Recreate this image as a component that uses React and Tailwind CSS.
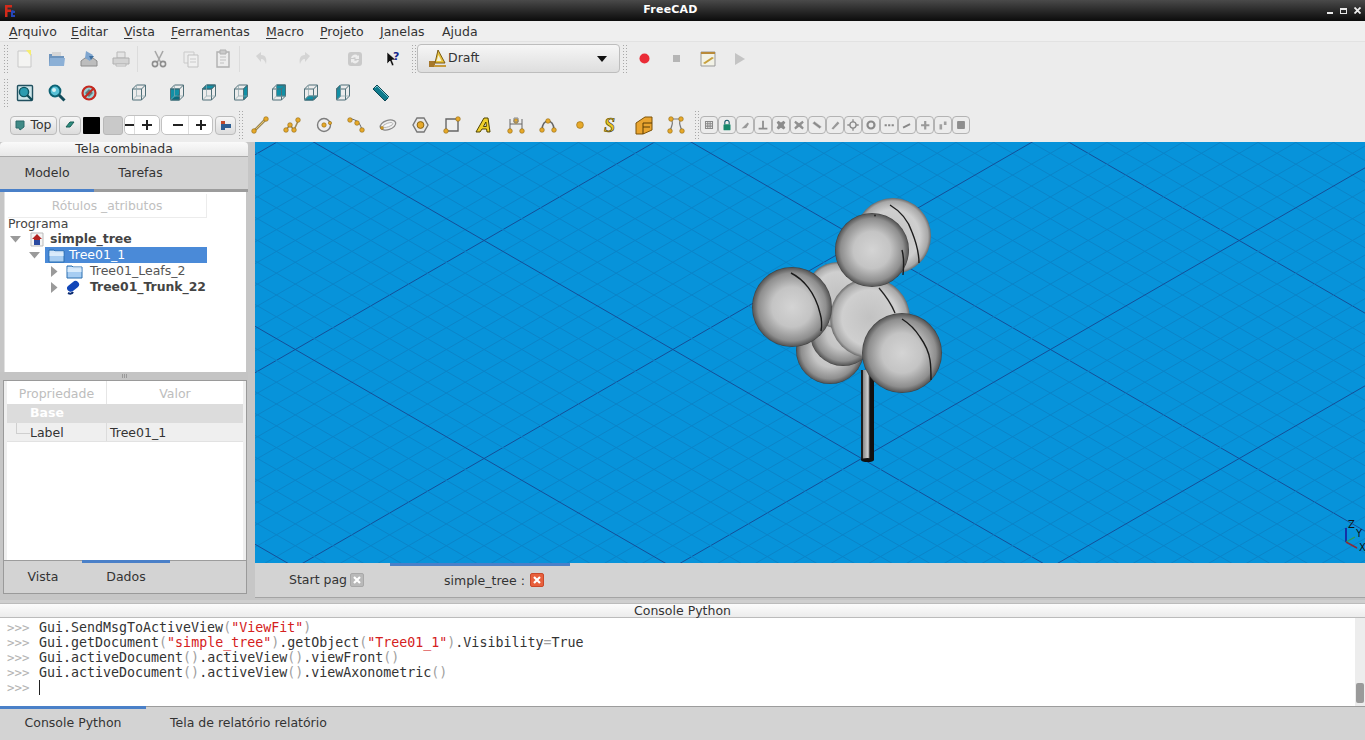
import React from "react";

const S = ({ children, size = 20, dim = false, view = "0 0 20 20" }) => (
  <svg width={size} height={size} viewBox={view} className={dim ? "opacity-50" : ""}>{children}</svg>
);

const Btn = ({ children, w = "w-8" }) => (
  <div className={`${w} h-8 flex items-center justify-center shrink-0`}>{children}</div>
);

const Sep = ({ w = "w-[6px]" }) => (
  <div className={`${w} h-[26px] flex justify-start shrink-0`}>
    <div className="w-px h-full bg-[#dcdcdc]" />
  </div>
);

const Handle = () => (
  <div className="w-[5px] h-[30px] shrink-0 bg-[radial-gradient(#a8a8a8_0.6px,transparent_0.8px)] bg-[length:3px_3px]" />
);

const IconNew = () => (
  <S><path d="M3 2h10l3 3v13H3z" fill="#f4f4f2" stroke="#c8c8c8" /><path d="M11 1l5 0 0 6z" fill="#f6ee70" /></S>
);
const IconOpen = () => (
  <S><path d="M2 5h6l2 2h7v10H2z" fill="#6f95bd" /><path d="M3 9h15l-1 8H2z" fill="#8cb0d6" /><path d="M5 3h9v4H5z" fill="#d6d6d6" /></S>
);
const IconSave = () => (
  <S><path d="M2 12l4-3h8l4 3v5H2z" fill="#bdbdbd" stroke="#8c8c8c" /><path d="M7 2l7 4-3 6-5-3z" fill="#7ea5cf" /><path d="M10 7h5l-3 4z" fill="#3f6f9f" /></S>
);
const IconPrint = () => (
  <S dim><path d="M6 3h8v6H6z" fill="#ddd" stroke="#888" /><path d="M2 9h16v6H2z" fill="#bbb" stroke="#777" /><path d="M5 15h10v2H5z" fill="#eee" stroke="#888" /></S>
);
const IconCut = () => (
  <S dim><path d="M6 2l6 12M14 2L8 14" stroke="#666" strokeWidth="1.6" /><circle cx="6" cy="15" r="2.6" fill="none" stroke="#333" strokeWidth="1.6" /><circle cx="14" cy="15" r="2.6" fill="none" stroke="#333" strokeWidth="1.6" /></S>
);
const IconCopy = () => (
  <S dim><path d="M3 3h10v11H3z" fill="#eee" stroke="#aaa" /><path d="M7 6h10v12H7z" fill="#f4f4f4" stroke="#999" /><path d="M9 10h6M9 13h6" stroke="#aaa" /></S>
);
const IconPaste = () => (
  <S dim><path d="M4 3h12v15H4z" fill="#eee" stroke="#777" strokeWidth="1.4" /><path d="M7 1h6v4H7z" fill="#aaa" stroke="#777" /><path d="M7 8h6M7 11h6M7 14h4" stroke="#999" /></S>
);
const IconUndo = () => (
  <S dim><path d="M5 7l5-4v3c5 0 6 4 5 9-1-3-2-5-5-5v3z" fill="#bdbdbd" /></S>
);
const IconRedo = () => (
  <S dim><path d="M15 7l-5-4v3c-5 0-6 4-5 9 1-3 2-5 5-5v3z" fill="#bdbdbd" /></S>
);
const IconRefresh = () => (
  <S dim><rect x="3" y="3" width="14" height="14" rx="3" fill="#aaa" /><path d="M6 9a4 4 0 0 1 7-2l1-1v4h-4l1-1a2 2 0 0 0-3 0zM14 11a4 4 0 0 1-7 2l-1 1v-4h4l-1 1a2 2 0 0 0 3 0z" fill="#eee" /></S>
);
const IconHelp = () => (
  <S><path d="M4 3v12l3-3 2 5 2-1-2-5h4z" fill="#111" stroke="#fff" strokeWidth=".6" /><text x="10" y="11" fontSize="11" fontWeight="700" fill="#17278c" fontFamily="DejaVu Sans">?</text></S>
);
const IconDraft = () => (
  <S view="0 0 20 20"><path d="M1 12h6v6H1z" fill="#a6782c" /><path d="M6 16h12v2H6z" fill="#c79a3c" /><path d="M10 1l7 13H7z" fill="#e7c23a" stroke="#7a5b14" /><path d="M10.5 6l3 6h-5z" fill="#f5f0d8" /></S>
);
const IconFit = () => (
  <S><rect x="2.5" y="2.5" width="15" height="15" rx="1" fill="#cfe6ea" stroke="#21505f" strokeWidth="1.4" /><circle cx="9" cy="9" r="4.6" fill="#2b9bb0" stroke="#0e5562" strokeWidth="1.4" /><path d="M12 12l5 5" stroke="#0e4b58" strokeWidth="2.4" /></S>
);
const IconZoom = () => (
  <S><circle cx="8" cy="8" r="5.4" fill="#58c0d6" stroke="#0d6274" strokeWidth="2" /><circle cx="7" cy="7" r="2" fill="#d8f3f6" /><path d="M12 12l5.5 5.5" stroke="#114b5a" strokeWidth="3" /></S>
);
const IconNo = () => (
  <S><circle cx="10" cy="10" r="6.5" fill="#9ad0d6" stroke="#c42a20" strokeWidth="2.2" /><path d="M6 10l4-4 4 4-4 4z" fill="#333" opacity=".55" /><path d="M5 15L15 5" stroke="#c42a20" strokeWidth="2.2" /></S>
);

const faces = {
  top: "M3.500 6l4-4h9l-4 4z",
  front: "M3.500 6h9v11h-9z",
  right: "M12.500 6l4-4v11l-4 4z",
  back: "M7.500 2h9v11h-9z",
  bottom: "M3.500 17l4-4h9l-4 4z",
  left: "M3.500 6l4-4v11l-4 4z",
};
const Cube = ({ face }) => (
  <S>
    {face && <path d={faces[face]} fill="#118fa5" stroke="#0a6373" />}
    {face === "front" && <path d="M3.500 17l9-6v6z" fill="#0a6b7c" />}
    <path d="M3.500 6l4-4h9v11l-4 4h-9zM3.500 6h9v11M12.500 6l4-4" fill="none" stroke="#4f6f78" />
    <path d="M7.500 2v11l-4 4M7.500 13h9" fill="none" stroke="#8ea6ac" strokeWidth=".7" />
  </S>
);
const IconMeasure = () => (
  <S><path d="M2 6l4-4 12 12-4 4z" fill="#0f7b8d" stroke="#0a4654" /><path d="M4 5l2-2 12 12" fill="none" stroke="#8ad0da" strokeWidth=".9" /></S>
);

const N = ({ x, y, r = 2.3 }) => <circle cx={x} cy={y} r={r} fill="#e7a92a" stroke="#8f6610" strokeWidth=".6" />;
const L = ({ d }) => <path d={d} fill="none" stroke="#a08a55" strokeWidth="1.6" />;

const DLine = () => <S><path d="M3 17L17 3" stroke="#7a6a3a" strokeWidth="2.600" /><path d="M3 17L17 3" stroke="#e2c272" strokeWidth="1.200" /><N x={4} y={16} /><N x={16} y={4} /></S>;
const DWire = () => <S><L d="M3 16l5-6 4 5 5-11" /><N x={4} y={15} /><N x={8} y={10} /><N x={12} y={15} /><N x={16} y={5} /></S>;
const DCircle = () => <S><circle cx="10" cy="10" r="6.5" fill="#eee" stroke="#7d7d7d" strokeWidth="1.4" /><N x={10} y={10} r={2.2} /><N x={16} y={8} r={1.6} /></S>;
const DArc = () => <S><path d="M4 4c7 0 11 5 12 12" fill="none" stroke="#666" strokeWidth="1" /><N x={4} y={5} /><N x={11} y={8} /><N x={16} y={15} /></S>;
const DEllipse = () => <S><ellipse cx="10" cy="10" rx="8" ry="4.6" transform="rotate(-18 10 10)" fill="#eee" stroke="#888" strokeWidth="1.3" /><ellipse cx="10" cy="10" rx="5" ry="1.8" transform="rotate(-18 10 10)" fill="#f8f8f8" stroke="#aaa" strokeWidth=".8" /><N x={4} y={13} r={1.4} /></S>;
const DPoly = () => <S><path d="M7 3h7l4 7-4 7H7l-4-7z" fill="#e8e8e8" stroke="#777" strokeWidth="1.4" /><circle cx="10.5" cy="10" r="3.4" fill="#e7a92a" stroke="#8a6518" /></S>;
const DRect = () => <S><path d="M4 4h12v12H4z" fill="#eee" stroke="#666" strokeWidth="1.4" /><N x={4} y={16} /><N x={16} y={4} /></S>;
const DText = () => <S><path d="M2 17L10 3h4l2 14h-3l-.4-3H8l-2 3zM9.400 11.500h3l-.5-4.500z" fill="#f0d02a" stroke="#4f4300" strokeWidth="1" fillRule="evenodd" /></S>;
const DDim = () => <S><path d="M4 4v13M16 4v13M4 9h12" stroke="#666" fill="none" /><N x={4} y={16} /><N x={16} y={16} /><N x={10} y={6} /><path d="M8 3h4v4H8z" fill="none" stroke="#888" /></S>;
const DCurve = () => <S><path d="M4 15c0-12 12-12 12 0" fill="none" stroke="#666" strokeWidth="1.5" /><N x={4} y={15} /><N x={10} y={6} /><N x={16} y={15} /></S>;
const DPoint = () => <S><N x={10} y={10} r={3.4} /></S>;
const DShape = () => <S><text x="2" y="17" fontSize="20" fontStyle="italic" fontWeight="700" fontFamily="Liberation Serif" fill="#e9c726" stroke="#3f3400" strokeWidth=".6">S</text></S>;
const DFace = () => <S><path d="M2 8l9-6h7v13l-9 4H2z" fill="#e9a42f" stroke="#7c5207" /><path d="M9 8h9M9 12h7M9 8v11" stroke="#5a3c05" fill="none" /></S>;
const DBez = () => <S><path d="M5 4c2 3 2 4-1 12M15 4c-2 3-2 4 1 12M5 4h10" fill="none" stroke="#777" strokeWidth="1.2" /><N x={5} y={4} /><N x={15} y={4} /><N x={4} y={16} /><N x={16} y={16} /></S>;

const snaps = [
  <path d="M4 4h8v8H4zM4 6.600h8M4 9.300h8M6.600 4v8M9.300 4v8" fill="none" stroke="#8a8a8a" strokeWidth="1.200" />,
  <g><path d="M5.500 7V5a2.500 2.500 0 0 1 5 0v2" fill="none" stroke="#156" strokeWidth="1.200" /><rect x="4" y="7" width="8" height="7" rx="1" fill="#17876b" /></g>,
  <path d="M4 12L11 5l1.500 1.500-3 5z" fill="#999" />,
  <path d="M7 3h2v8h4v2H3v-2h4z" fill="#8c8c8c" />,
  <path d="M5 3l3 2 3-2 2 2-2 3 2 3-2 2-3-2-3 2-2-2 2-3-2-3z" fill="#8c8c8c" />,
  <path d="M4 3l4 3 4-3 1.500 2-3 3 3 3-1.500 2-4-3-4 3-1.500-2 3-3-3-3z" fill="#909090" />,
  <path d="M3 6l2-2 8 6-2 2z" fill="#8a8a8a" stroke="#bbb" strokeWidth=".5" />,
  <path d="M4 12l7-8 2 2-7 7z" fill="#999" />,
  <g><circle cx="8" cy="8" r="3.500" fill="none" stroke="#8a8a8a" strokeWidth="1.500" /><path d="M8 1.500v3M8 11.500v3M1.500 8h3M11.500 8h3" stroke="#8a8a8a" strokeWidth="1.500" /></g>,
  <circle cx="8" cy="8" r="4" fill="none" stroke="#8a8a8a" strokeWidth="2.500" />,
  <path d="M3 7h2.500v2.500H3zM7 7h2.500v2.500H7zM11 7h2.500v2.500H11z" fill="#888" />,
  <path d="M3 10l8-4 1 2-8 4z" fill="#888" />,
  <path d="M7 3.500h2.500V7H13v2.500H9.500V13H7V9.500H3.500V7H7z" fill="#999" />,
  <path d="M4 7h3v6H4zM9 4h3v4H9z" fill="#a0a0a0" />,
  <rect x="3.500" y="3.500" width="9" height="9" rx="1" fill="#8e8e8e" />,
];

const SmallBtn = ({ children, className = "" }) => (
  <div className={`h-[19px] rounded-[4px] border border-[#bcbcbc] bg-gradient-to-b from-[#f6f6f6] to-[#dcdcdc] flex items-center justify-center shrink-0 ${className}`}>
    {children}
  </div>
);

const Spin = ({ pre, className, preW, minusW }) => (
  <div className={`h-[20px] bg-white rounded-[5px] border border-[#c2c2c2] flex items-center overflow-hidden shrink-0 ${className}`}>
    <span className={`${preW} text-[12px] leading-none text-[#222] overflow-hidden shrink-0`}>{pre}</span>
    <span className={`${minusW} flex justify-center overflow-hidden shrink-0`}><span className="w-[10px] h-[2px] bg-[#222] shrink-0" /></span>
    <span className="w-px h-full bg-[#ddd] shrink-0" />
    <span className="flex-1 flex justify-center">
      <svg width="10" height="10" viewBox="0 0 10 10"><path d="M4 0h2v4h4v2H6v4H4V6H0V4h4z" fill="#222" /></svg>
    </span>
  </div>
);

const Menu = ({ u, r, pre = "", cls }) => (
  <span className={`whitespace-nowrap ${cls}`}>{pre}<span className="underline underline-offset-2">{u}</span>{r}</span>
);

const slope = 0.5774;
const range = (a, b) => Array.from({ length: b - a + 1 }, (_, i) => a + i);

const Sphere = ({ x, y, r, id = "ball" }) => <circle cx={x} cy={y} r={r} fill={`url(#${id})`} />;

const Viewport = () => (
  <svg viewBox="255 142 1110 421" className="w-full h-full block bg-[#0793da]">
    <defs>
      <radialGradient id="ball" cx="50%" cy="50%" r="50%">
        <stop offset="0%" stopColor="#d4d4d4" />
        <stop offset="50%" stopColor="#c4c4c4" />
        <stop offset="85%" stopColor="#8e8e8e" />
        <stop offset="97%" stopColor="#5c5c5c" />
        <stop offset="100%" stopColor="#3a3a3a" />
      </radialGradient>
      <radialGradient id="soft" cx="50%" cy="50%" r="50%">
        <stop offset="0%" stopColor="#c2c2c2" />
        <stop offset="70%" stopColor="#cfcfcf" />
        <stop offset="92%" stopColor="#a8a8a8" />
        <stop offset="100%" stopColor="#6a6a6a" />
      </radialGradient>
      <linearGradient id="trunk" x1="0" x2="1" y1="0" y2="0">
        <stop offset="0%" stopColor="#1a1a1a" />
        <stop offset="15%" stopColor="#222" />
        <stop offset="17%" stopColor="#8a8a8a" />
        <stop offset="55%" stopColor="#d2d2d2" />
        <stop offset="62%" stopColor="#666" />
        <stop offset="70%" stopColor="#111" />
        <stop offset="100%" stopColor="#111" />
      </linearGradient>
    </defs>
    {range(-60, 60).map((k) => {
      const major = ((k % 10) + 10) % 10 === 0;
      const c1 = -257 + k * 21.8;
      const c2 = 738 + k * 21.8;
      const stroke = major ? "#154f98" : "#0b84c8";
      return (
        <g key={k}>
          <line x1="255" x2="1365" y1={255 * slope + c1} y2={1365 * slope + c1} stroke={stroke} strokeWidth="1" />
          <line x1="255" x2="1365" y1={c2 - 255 * slope} y2={c2 - 1365 * slope} stroke={stroke} strokeWidth="1" />
        </g>
      );
    })}
    <rect x="861" y="370" width="13" height="90" fill="url(#trunk)" />
    <ellipse cx="867.500" cy="460" rx="6.500" ry="2" fill="#111" />
    <Sphere x={830} y={350} r={34} />
    <Sphere x={843} y={333} r={33} />
    <Sphere x={838} y={295} r={33} id="soft" />
    <Sphere x={870} y={318} r={40} id="soft" />
    <path d="M879 288c6 7 12 15 16 25" fill="none" stroke="#222" strokeWidth="1.300" />
    <Sphere x={893} y={236} r={38} id="soft" />
    <path d="M890 205c10 6 18 15 22 27 4 10 7 20 7 31" fill="none" stroke="#1c1c1c" strokeWidth="1.400" />
    <Sphere x={872} y={250} r={37} />
    <path d="M902 250c2 7 2 15 1 25" fill="none" stroke="#1c1c1c" strokeWidth="1.400" />
    <circle cx="875" cy="215.500" r=".9" fill="#222" />
    <Sphere x={792} y={307} r={40} />
    <path d="M791 273c12 6 24 19 29 40 2 7 2 13 1 18" fill="none" stroke="#1a1a1a" strokeWidth="1.400" />
    <Sphere x={902} y={353} r={40} />
    <path d="M902 319c8 5 13 10 18 18 5 7 9 16 10 23 1 6 1 12 1 20" fill="none" stroke="#1a1a1a" strokeWidth="1.400" />
    <path d="M1346 542v-14" stroke="#1a1a9a" strokeWidth="1.600" />
    <path d="M1346 542l9-5" stroke="#2e9a52" strokeWidth="1.400" />
    <path d="M1346 542l11 6" stroke="#8a2a3a" strokeWidth="1.600" />
    <text x="1348" y="528" fontSize="10" fill="#111" fontFamily="DejaVu Sans">Z</text>
    <text x="1356" y="537" fontSize="10" fill="#111" fontFamily="DejaVu Sans">Y</text>
    <text x="1359" y="551" fontSize="10" fill="#111" fontFamily="DejaVu Sans">X</text>
  </svg>
);

const Caret = ({ open }) =>
  open ? (
    <svg width="11" height="7" viewBox="0 0 11 7"><path d="M0 0h11L5.500 6.500z" fill="#9a9a9a" /></svg>
  ) : (
    <svg width="7" height="11" viewBox="0 0 7 11"><path d="M0 0v11l6.500-5.500z" fill="#9a9a9a" /></svg>
  );

const Folder = () => (
  <svg width="17" height="15" viewBox="0 0 17 15"><path d="M1 2h5l1 1h9v11H1z" fill="#a7cdf2" stroke="#2a6fb0" /><path d="M1.500 4h14" stroke="#fff" /><path d="M1.500 5h14v3h-14z" fill="#d9ebfb" /></svg>
);

const Close = ({ red }) => (
  <div className={`w-[14px] h-[14px] rounded-[2px] flex items-center justify-center shrink-0 border ${red ? "bg-[#e8603c] border-[#c9482a]" : "bg-[#b9b9b9] border-[#a8a8a8]"}`}>
    <svg width="8" height="8" viewBox="0 0 8 8"><path d="M1 1l6 6M7 1L1 7" stroke="#fff" strokeWidth="2.200" /></svg>
  </div>
);

const Kw = ({ children }) => <span className="text-[#d42020]">{children}</span>;
const G = ({ children }) => <span className="text-[#a0a0a0]">{children}</span>;

const ConsoleLine = ({ children }) => (
  <div className="h-[15px] leading-[15px] whitespace-pre flex">
    <span className="w-[32px] text-[#b4b4b4] shrink-0 text-[12.500px]">{">>>"}</span>
    <span className="text-[#333]">{children}</span>
  </div>
);

export default function App() {
  return (
    <div className="w-[1365px] h-[740px] overflow-hidden flex flex-col bg-[#cdcdcd] text-[#333] font-['DejaVu_Sans',sans-serif] text-[12.500px]">
      {/* title bar */}
      <div className="h-[21px] shrink-0 bg-gradient-to-b from-[#4a4a4a] via-[#2a2a2a] to-[#0c0c0c] flex items-center relative">
        <div className="w-[16px] pl-[4px] flex shrink-0">
          <svg width="12" height="12" viewBox="0 0 12 12"><path d="M1 0h7v2.500H3.500v2H7V7H3.500v5H1z" fill="#d22a1a" /><path d="M8 5l3 1v2H9v2h2v2H7V6z" fill="#2546b8" /></svg>
        </div>
        <div className="flex-1 text-center text-white font-bold text-[11px] tracking-[0.2px] pr-[2px]">FreeCAD</div>
        <div className="flex items-center gap-[7px] pr-[4px] shrink-0">
          <span className="w-[6px] h-[2px] mt-[4px] bg-[#e8e8e8]" />
          <span className="w-[7px] h-[6px] border border-t-2 border-[#e8e8e8]" />
          <svg width="7" height="7" viewBox="0 0 7 7"><path d="M.5.500l6 6M6.500.500l-6 6" stroke="#eee" strokeWidth="1.800" /></svg>
        </div>
      </div>

      {/* menu */}
      <div className="h-[21px] shrink-0 bg-[#efefef] flex items-center pl-[9px] pt-[2px] text-[#333] border-b border-[#e2e2e2]">
        <Menu u="A" r="rquivo" cls="w-[62px]" />
        <Menu u="E" r="ditar" cls="w-[53px]" />
        <Menu u="V" r="ista" cls="w-[47px]" />
        <Menu u="F" r="erramentas" cls="w-[95px]" />
        <Menu u="M" r="acro" cls="w-[54px]" />
        <Menu u="P" r="rojeto" cls="w-[60px]" />
        <Menu u="J" r="anelas" cls="w-[62px]" />
        <Menu u="" r="Ajuda" />
      </div>

      {/* toolbar 1 */}
      <div className="h-[33px] shrink-0 bg-[#ececec] flex items-center pl-[3px]">
        <Handle />
        <div className="w-px" />
        <Btn><IconNew /></Btn><Btn><IconOpen /></Btn><Btn><IconSave /></Btn><Btn><IconPrint /></Btn>
        <Sep /><Btn><IconCut /></Btn><Btn><IconCopy /></Btn><Btn><IconPaste /></Btn>
        <Sep /><Btn><IconUndo /></Btn><div className="w-[12px]" /><Btn><IconRedo /></Btn>
        <div className="w-[14px]" /><Sep w="w-0" /><div className="w-[4px]" /><Btn><IconRefresh /></Btn><div className="w-[2px]" />
        <Sep w="w-0" /><div className="w-[4px]" /><Btn><IconHelp /></Btn>
        <div className="w-[2px]" /><Handle />
        <div className="w-[1px]" />
        <div className="w-[203px] h-[29px] shrink-0 rounded-[4px] border border-[#bdbdbd] bg-gradient-to-b from-[#f6f6f6] to-[#dedede] flex items-center pl-[10px] pr-[12px] text-[#333]">
          <IconDraft />
          <span className="flex-1">Draft</span>
          <svg width="10" height="6" viewBox="0 0 10 6"><path d="M0 0h10L5 6z" fill="#111" /></svg>
        </div>
        <div className="w-[2px]" /><Handle />
        <div className="w-[1px]" />
        <Btn><svg width="11" height="11" viewBox="0 0 11 11"><circle cx="5.500" cy="5.500" r="5" fill="#ea2c36" /></svg></Btn>
        <Btn><span className="w-[7px] h-[7px] bg-[#b5b5b5]" /></Btn>
        <Btn><svg width="18" height="18" viewBox="0 0 18 18"><path d="M2 2h14v14H2z" fill="#f2f2e6" stroke="#999" /><path d="M2 2h14v2H2z" fill="#b88a3a" /><path d="M4 13l9-6 2 1-9 6z" fill="#c7a03c" /></svg></Btn>
        <Btn><svg width="10" height="12" viewBox="0 0 10 12"><path d="M0 0v12l10-6z" fill="#c4c4c4" /></svg></Btn>
      </div>

      {/* toolbar 2 */}
      <div className="h-[33px] shrink-0 bg-[#ececec] flex items-center pl-[3px] pt-[2px]">
        <Handle /><div className="w-px" />
        <Btn><IconFit /></Btn><Btn><IconZoom /></Btn><Btn><IconNo /></Btn>
        <div className="w-[15px]" /><Sep w="w-0" /><div className="w-[3px]" />
        <Btn><Cube /></Btn>
        <div className="w-[3px]" /><Sep w="w-[0px]" /><div className="w-[3px]" />
        <Btn><Cube face="front" /></Btn><Btn><Cube face="top" /></Btn><Btn><Cube face="right" /></Btn>
        <div className="w-[3px]" /><Sep w="w-[0px]" /><div className="w-[3px]" />
        <Btn><Cube face="back" /></Btn><Btn><Cube face="bottom" /></Btn><Btn><Cube face="left" /></Btn>
        <div className="w-[3px]" /><Sep w="w-[0px]" /><div className="w-[3px]" />
        <Btn><IconMeasure /></Btn>
      </div>

      {/* toolbar 3 */}
      <div className="h-[34px] shrink-0 bg-[#ececec] flex items-center pl-[10px]">
        <SmallBtn className="w-[47px] gap-[5px]">
          <svg width="10" height="11" viewBox="0 0 10 11"><path d="M1 1h8v6l-4 3-1-2H1z" fill="#3f8a86" stroke="#2a6a6a" /></svg>
          <span className="text-[12.500px] text-[#333]">Top</span>
        </SmallBtn>
        <div className="w-[2px]" />
        <SmallBtn className="w-[22px]">
          <svg width="12" height="10" viewBox="0 0 12 10"><path d="M2 7l4-5 4 0-4 5z" fill="#2f8f80" stroke="#185e56" /></svg>
        </SmallBtn>
        <div className="w-[2px]" />
        <div className="w-[17px] h-[17px] bg-black shrink-0 rounded-[1px]" />
        <div className="w-[3px]" />
        <div className="w-[20px] h-[19px] bg-[#c9c9c9] border border-[#b8b8b8] rounded-[3px] shrink-0" />
        <div className="w-[1px]" />
        <Spin className="w-[36px]" pre="" preW="w-0" minusW="w-[9px]" />
        <div className="w-[1px]" />
        <Spin className="w-[52px]" pre="" preW="w-[5px]" minusW="w-[21px]" />
        <div className="w-[2px]" />
        <SmallBtn className="w-[21px]">
          <svg width="12" height="12" viewBox="0 0 12 12"><path d="M1 2h4v3h6v4H5v2H1z" fill="#2e5e92" /><path d="M1 2h4v3H1z" fill="#c2492a" /></svg>
        </SmallBtn>
        <div className="w-[2px]" />
        <Handle />
        <div className="w-[1px]" />
        <Btn><DLine /></Btn><Btn><DWire /></Btn><Btn><DCircle /></Btn><Btn><DArc /></Btn><Btn><DEllipse /></Btn>
        <Btn><DPoly /></Btn><Btn><DRect /></Btn><Btn><DText /></Btn><Btn><DDim /></Btn><Btn><DCurve /></Btn>
        <Btn><DPoint /></Btn><Btn><DShape /></Btn><Btn><DFace /></Btn><Btn><DBez /></Btn>
        <div className="w-[2px]" /><Handle /><div className="w-[1px]" />
        <div className="flex">
          {snaps.map((p, i) => (
            <div key={i} className="w-[18px] h-[18px] rounded-[4px] border border-[#b3b3b3] bg-[#ececec] flex items-center justify-center shrink-0">
              <svg width="14" height="14" viewBox="0 0 16 16">{p}</svg>
            </div>
          ))}
        </div>
      </div>

      {/* main */}
      <div className="h-[458px] shrink-0 flex bg-[#c6c6c6]">
        {/* left dock */}
        <div className="w-[248px] shrink-0 flex flex-col">
          <div className="h-[15px] shrink-0 rounded-t-[4px] bg-gradient-to-b from-[#fafafa] to-[#e8e8e8] text-center leading-[13px] text-[#333] border-b border-[#aaa]">Tela combinada</div>
          <div className="h-[35px] shrink-0 bg-[#d3d3d3] flex border-b-[3px] border-[#9c9c9c] relative">
            <div className="w-[94px] text-center leading-[32px] -mb-[3px] border-b-[3px] border-[#4a80c8]">Modelo</div>
            <div className="w-[93px] text-center leading-[32px]">Tarefas</div>
          </div>
          <div className="h-[180px] shrink-0 mx-[2px] ml-[4px] bg-white border-l border-[#e2e2e2] flex flex-col">
            <div className="h-[24px] mt-[2px] w-[199px] ml-[3px] text-center text-[#c0c0c0] text-[12.300px] leading-[24px] border-b border-r border-[#ececec]">Rótulos _atributos</div>
            <div className="h-[14px] pl-[3px] -mt-px leading-[14px] text-[#444]">Programa</div>
            <div className="h-[16px] flex items-center pl-[5px] whitespace-nowrap">
              <Caret open />
              <div className="w-[9px]" />
              <svg width="14" height="15" viewBox="0 0 14 15"><path d="M1 1h12v13H1z" fill="#f4f4f4" stroke="#bbb" /><path d="M7 2l5 5h-2v6H4V7H2z" fill="#b22320" /><path d="M4 8h6v5H4z" fill="#2a4aa0" /></svg>
              <span className="ml-[6px] font-bold text-[#444]">simple_tree</span>
            </div>
            <div className="h-[16px] flex items-center pl-[24px] whitespace-nowrap">
              <Caret open />
              <div className="w-[5px]" />
              <div className="w-[162px] h-[16px] bg-[#4a8ad8] flex items-center pl-[3px] text-white"><Folder /><span className="ml-[4px]">Tree01_1</span></div>
            </div>
            <div className="h-[16px] flex items-center pl-[46px] whitespace-nowrap">
              <Caret />
              <div className="w-[8px]" />
              <Folder />
              <span className="ml-[7px] text-[#555]">Tree01_Leafs_2</span>
            </div>
            <div className="h-[16px] flex items-center pl-[46px] whitespace-nowrap">
              <Caret />
              <div className="w-[7px]" />
              <svg width="16" height="16" viewBox="0 0 16 16"><path d="M2 10a3 3 0 0 1 1-3l5-4a3.500 3.500 0 0 1 5 5l-5 4a4 4 0 0 1-6-2z" fill="#1146b8" /><path d="M3 14c2 1 4 1 5-1" stroke="#0a2a70" fill="none" strokeWidth="2" /></svg>
              <span className="ml-[9px] font-bold text-[#444] text-[12.400px]">Tree01_Trunk_22</span>
            </div>
          </div>
          <div className="h-[8px] shrink-0 flex items-center justify-center bg-[#c4c4c4]">
            <div className="w-[5px] h-[4px] border-x border-[#999] relative"><div className="w-px h-full mx-auto bg-[#999]" /></div>
          </div>
          <div className="h-[214px] shrink-0 ml-[3px] mr-[1px] border border-[#9a9a9a] bg-[#efefef] flex flex-col">
            <div className="h-[23px] shrink-0 mx-[3px] flex text-[#bdbdbd] text-center leading-[25px] bg-white">
              <div className="w-[100px] border-r border-[#e6e6e6]">Propriedade</div>
              <div className="flex-1">Valor</div>
            </div>
            <div className="h-[19px] shrink-0 mx-[3px] bg-[#dcdcdc] text-white font-bold pl-[23px] leading-[17px]">Base</div>
            <div className="h-[19px] shrink-0 mx-[3px] bg-[#efefef] flex leading-[19px] border-b border-[#e2e2e2]">
              <div className="w-[100px] pl-[9px] border-r border-[#dcdcdc] flex">
                <div className="w-[14px] h-[11px] border-l border-b border-[#cfcfcf] shrink-0" />
                <span>Label</span>
              </div>
              <div className="pl-[3px]">Tree01_1</div>
            </div>
            <div className="flex-1 mx-[3px] bg-white" />
            <div className="h-[33px] shrink-0 bg-[#d3d3d3] border-t border-[#9c9c9c] flex">
              <div className="w-[78px] text-center leading-[31px]">Vista</div>
              <div className="w-[88px] text-center leading-[31px] border-t-[3px] border-[#4a80c8] -mt-px h-[33px]">
                <span className="block -mt-[2px]">Dados</span>
              </div>
            </div>
          </div>
        </div>
        {/* splitter */}
        <div className="w-[7px] shrink-0 bg-[#c6c6c6]" />
        {/* center */}
        <div className="flex-1 flex flex-col min-w-0">
          <div className="h-[421px] shrink-0"><Viewport /></div>
          <div className="h-[35px] shrink-0 bg-[#d3d3d3] border-b border-[#a4a4a4] flex">
            <div className="w-[135px] flex items-center pl-[34px]">
              <div className="w-[61px] h-[16px] leading-[16px] overflow-hidden whitespace-nowrap">Start pag</div>
              <Close />
            </div>
            <div className="w-[180px] flex items-center pl-[54px] border-t-[3px] border-[#4a80c8]">
              <div className="w-[86px] h-[16px] leading-[16px] overflow-hidden whitespace-nowrap -mt-[2px]">simple_tree :</div>
              <div className="-mt-[3px]"><Close red /></div>
            </div>
          </div>
        </div>
      </div>

      {/* console dock */}
      <div className="h-[3px] shrink-0 bg-[#cfcfcf]" />
      <div className="h-[15px] shrink-0 bg-gradient-to-b from-[#fcfcfc] to-[#ececec] border-y border-[#bbb] text-center leading-[13px] text-[#333]">Console Python</div>
      <div className="h-[88px] shrink-0 bg-white flex font-['DejaVu_Sans_Mono',monospace] text-[13.300px]">
        <div className="flex-1 pl-[7px] pt-[2px]">
          <ConsoleLine>Gui.SendMsgToActiveView<G>(</G><Kw>"ViewFit"</Kw><G>)</G></ConsoleLine>
          <ConsoleLine>Gui.getDocument<G>(</G><Kw>"simple_tree"</Kw><G>)</G>.getObject<G>(</G><Kw>"Tree01_1"</Kw><G>)</G>.Visibility<G>=</G>True</ConsoleLine>
          <ConsoleLine>Gui.activeDocument<G>()</G>.activeView<G>()</G>.viewFront<G>()</G></ConsoleLine>
          <ConsoleLine>Gui.activeDocument<G>()</G>.activeView<G>()</G>.viewAxonometric<G>()</G></ConsoleLine>
          <ConsoleLine><span className="inline-block w-px h-[15px] bg-[#222]" /></ConsoleLine>
        </div>
        <div className="w-[10px] shrink-0 bg-[#ededed] flex flex-col justify-end pb-[3px]">
          <div className="h-[20px] mx-[1px] bg-[#9a9a9a] rounded-[2px]" />
        </div>
      </div>
      <div className="flex-1 bg-[#d3d3d3] border-t border-[#9c9c9c] flex text-[#333]">
        <div className="w-[146px] text-center leading-[27px] border-t-[3px] border-[#4a80c8] -mt-px">Console Python</div>
        <div className="pl-[24px] leading-[27px] mt-[2px] whitespace-nowrap">Tela de relatório relatório</div>
      </div>
    </div>
  );
}
